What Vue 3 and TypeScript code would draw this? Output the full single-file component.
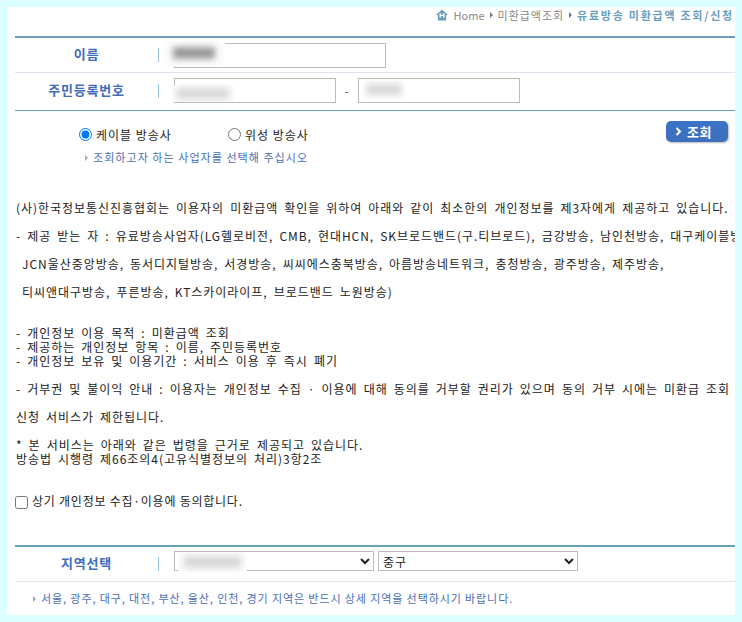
<script setup lang="ts">
const blocks: string[][] = [
  ['(사)한국정보통신진흥협회는 이용자의 미환급액 확인을 위하여 아래와 같이 최소한의 개인정보를 제3자에게 제공하고 있습니다.'],
  ['- 제공 받는 자 : 유료방송사업자(LG헬로비전, CMB, 현대HCN, SK브로드밴드(구.티브로드), 금강방송, 남인천방송, 대구케이블방송,'],
  [' JCN울산중앙방송, 동서디지털방송, 서경방송, 씨씨에스충북방송, 아름방송네트워크, 충청방송, 광주방송, 제주방송,'],
  [' 티씨앤대구방송, 푸른방송, KT스카이라이프, 브로드밴드 노원방송)'],
  [],
  ['- 개인정보 이용 목적 : 미환급액 조회', '- 제공하는 개인정보 항목 : 이름, 주민등록번호', '- 개인정보 보유 및 이용기간 : 서비스 이용 후 즉시 폐기'],
  ['- 거부권 및 불이익 안내 : 이용자는 개인정보 수집 · 이용에 대해 동의를 거부할 권리가 있으며 동의 거부 시에는 미환급 조회 및'],
  ['신청 서비스가 제한됩니다.'],
  ['* 본 서비스는 아래와 같은 법령을 근거로 제공되고 있습니다.', '방송법 시행령 제66조의4(고유식별정보의 처리)3항2조'],
]
</script>

<template>
  <div class="page">
    <nav class="crumbs">
      <svg class="home" width="12" height="12" viewBox="0 0 13 13"><path d="M6.500 0.500 L13 6.500 H11 V12.500 H2 V6.500 H0 Z" fill="#6b9dbd" /><path d="M4.500 4.500 V9.500 M8.500 4.500 V9.500 M4.500 7 H8.500" stroke="#fff" stroke-width="1.400" fill="none" /></svg>
      <span class="home-txt">Home</span><i class="sep"></i><span>미환급액조회</span><i class="sep"></i><b>유료방송 미환급액 조회/신청</b>
    </nav>

    <section class="form-top">
      <div class="row first">
        <label class="lbl">이름</label>
        <div class="field">
          <div class="box"><input class="inp w212" type="text" /><span class="mask m-name"><span class="smear"></span></span></div>
        </div>
      </div>
      <div class="row second">
        <label class="lbl">주민등록번호</label>
        <div class="field">
          <div class="box"><input class="inp w162" type="text" /><span class="mask m-id1"><span class="smear light"></span></span></div>
          <span class="dash">-</span>
          <div class="box"><input class="inp w162" type="text" /><span class="mask m-id2"><span class="smear light"></span></span></div>
        </div>
      </div>
    </section>

    <section class="choice">
      <div class="choice-main">
        <div class="radios">
          <label class="radio r1"><input type="radio" name="kind" checked />케이블 방송사</label>
          <label class="radio"><input type="radio" name="kind" />위성 방송사</label>
        </div>
        <p class="hint"><i class="tri"></i>조회하고자 하는 사업자를 선택해 주십시오</p>
      </div>
      <button class="search" type="button">
        <svg width="7" height="9" viewBox="0 0 7 9"><path d="M1.500 1 L5 4.500 L1.500 8" fill="none" stroke="#fff" stroke-width="2" /></svg>
        조회
      </button>
    </section>

    <section class="terms">
      <div v-for="(b, i) in blocks" :key="i" class="block" :class="{ empty: !b.length }">
        <p v-for="l in b" :key="l">{{ l }}</p>
      </div>
    </section>

    <label class="agree"><input type="checkbox" />상기 개인정보 수집·이용에 동의합니다.</label>

    <section class="region">
      <div class="row">
        <label class="lbl">지역선택</label>
        <div class="field sel-field">
          <div class="box"><select class="sel"><option></option></select><span class="mask m-sel"><span class="smear light"></span></span></div>
          <select class="sel"><option>중구</option></select>
        </div>
      </div>
      <p class="note"><i class="tri"></i>서울, 광주, 대구, 대전, 부산, 울산, 인천, 경기 지역은 반드시 상세 지역을 선택하시기 바랍니다.</p>
    </section>
  </div>
</template>

<style>
html, body { margin: 0; background: #dcffff; overflow: hidden; }
</style>

<style scoped>
.page {
  box-sizing: border-box;
  width: 728px;
  height: 608px;
  margin: 7px 0 0 7px;
  padding-left: 8px;
  background: #fff;
  overflow: hidden;
  font-family: "Noto Sans CJK KR", "Noto Sans", sans-serif;
  font-size: 12px;
  letter-spacing: 0.96px;
  color: #222;
}
p { margin: 0; }
i { display: inline-block; }
.crumbs {
  height: 29px;
  display: flex;
  justify-content: flex-end;
  align-items: center;
  gap: 4px;
  padding: 0 1px 13px 0;
  box-sizing: border-box;
  white-space: nowrap;
  font-size: 11px;
  color: #888;
}
.crumbs b { color: #6b9dbd; font-weight: 700; letter-spacing: 1.75px; }
.home { margin-right: 2px; }
.home-txt { letter-spacing: 0; }
.sep { width: 0; height: 0; border-left: 3px solid #778; border-top: 3px solid transparent; border-bottom: 3px solid transparent; margin: 0 1px; }
.form-top { border-top: 2px solid #6d9dbd; border-bottom: 1px solid #6d9dbd; }
.row { display: flex; align-items: center; }
.first { height: 34px; border-bottom: 1px solid #dde4f0; }
.second { height: 37px; padding-bottom: 2px; box-sizing: border-box; }
.lbl {
  width: 144px;
  flex: none;
  text-align: center;
  font-size: 13px;
  font-weight: 700;
  color: #3f6cbb;
  letter-spacing: .8px;
  box-sizing: border-box;
  border-right: 1px solid #9cc3dc;
  height: 14px;
  line-height: 12px;
}
.field { display: flex; align-items: center; margin-left: 15px; }
.box { position: relative; display: flex; }
.inp {
  box-sizing: border-box;
  height: 25px;
  margin: 0;
  padding: 0;
  border: 1px solid #bbb;
  border-radius: 0;
  outline: 0;
  background: #fff;
}
.w212 { width: 212px; }
.w162 { width: 162px; }
.dash { width: 22px; text-align: center; color: #555; }
.mask { position: absolute; background: #fcfcfc; filter: blur(.6px); }
.smear { position: absolute; inset: 25% 16%; background: #999; filter: blur(3px); }
.smear.light { background: #d8d8d8; inset: 15% 8%; }
.m-name { left: -11px; top: -2px; width: 62px; height: 25px; }
.m-id1 { left: -2px; top: 7px; width: 62px; height: 17px; }
.m-id2 { left: 6px; top: 4px; width: 40px; height: 15px; }
.choice { display: flex; height: 90px; }
.choice-main { flex: none; width: 651px; }
.radios { display: flex; margin: 15px 0 0 64px; }
.radio { display: flex; align-items: center; height: 16px; }
.r1 { width: 149px; }
.radio input { width: 13px; height: 13px; margin: 0 4px 0 0; }
.hint { margin: 7px 0 0 70px; line-height: 16px; font-size: 11px; letter-spacing: 1.05px; color: #4a6eb5; }
.tri { width: 0; height: 0; border-left: 3px solid #9ab; border-top: 3px solid transparent; border-bottom: 3px solid transparent; margin-right: 5px; vertical-align: 1px; }
.search {
  box-sizing: border-box;
  width: 62px;
  height: 21px;
  margin-top: 10px;
  padding: 0 0 0 9px;
  border: 0;
  border-radius: 5px;
  background: linear-gradient(#3a73c8, #3f6fbb);
  box-shadow: 1px 1px 2px #bbb;
  color: #fff;
  font: 700 13px "Noto Sans CJK KR", sans-serif;
  letter-spacing: .5px;
  display: flex;
  align-items: center;
  gap: 5px;
}
.terms { margin-left: 1px; white-space: pre; line-height: 14px; word-spacing: 2.4px; }
.block { margin-bottom: 14px; }
.block.empty { height: 13px; margin: 0; }
.agree { display: flex; align-items: center; height: 16px; margin-top: 26px; letter-spacing: .76px; }
.agree input { width: 13px; height: 13px; margin: 4px 4px 0 0; }
.region { margin-top: 37px; border-top: 2px solid #66a3bb; }
.region .row { height: 35px; box-sizing: border-box; border-bottom: 1px solid #dde4f0; }
.sel-field { gap: 4px; margin-bottom: 6px; }
.sel {
  box-sizing: border-box;
  width: 200px;
  height: 20px;
  margin: 0;
  border: 1px solid #bbb;
  border-radius: 0;
  background: #fff;
  color: #222;
  font: 12px "Noto Sans CJK KR", sans-serif;
  letter-spacing: .96px;
}
.m-sel { left: 4px; top: 2px; width: 69px; height: 18px; }
.note { margin: 8px 0 0 18px; line-height: 16px; font-size: 11px; letter-spacing: .9px; color: #4a6eb5; white-space: nowrap; }
</style>
